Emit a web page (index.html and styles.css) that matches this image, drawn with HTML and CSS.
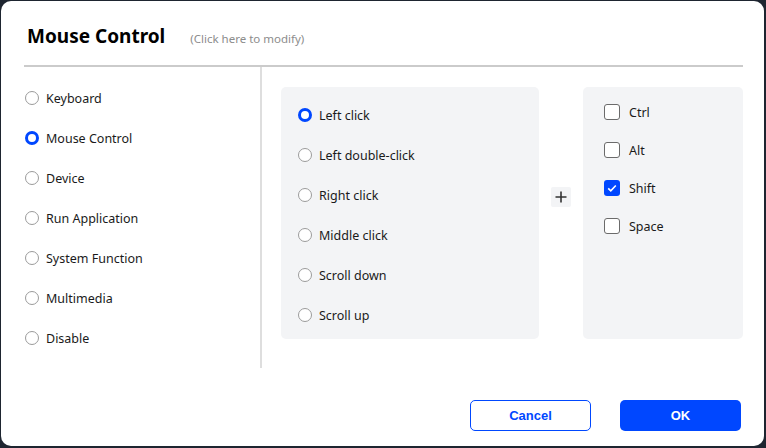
FILE: index.html
```html
<!DOCTYPE html>
<html>
<head>
<meta charset="utf-8">
<title>Mouse Control</title>
<link rel="stylesheet" href="styles.css">
</head>
<body>
<div class="dialog">
	<div class="head">
		<h1 class="title">Mouse Control</h1>
		<span class="hint">(Click here to modify)</span>
	</div>

	<div class="body">
		<!-- key function type -->
		<ul class="types">
			<li class="opt"><span class="radio"></span>Keyboard</li>
			<li class="opt"><span class="radio on"></span>Mouse Control</li>
			<li class="opt"><span class="radio"></span>Device</li>
			<li class="opt"><span class="radio"></span>Run Application</li>
			<li class="opt"><span class="radio"></span>System Function</li>
			<li class="opt"><span class="radio"></span>Multimedia</li>
			<li class="opt"><span class="radio"></span>Disable</li>
		</ul>

		<div class="setup">
			<ul class="panel clicks">
				<li class="opt"><span class="radio on"></span>Left click</li>
				<li class="opt"><span class="radio"></span>Left double-click</li>
				<li class="opt"><span class="radio"></span>Right click</li>
				<li class="opt"><span class="radio"></span>Middle click</li>
				<li class="opt"><span class="radio"></span>Scroll down</li>
				<li class="opt"><span class="radio"></span>Scroll up</li>
			</ul>

			<span class="plus">
				<svg width="12" height="12" viewBox="0 0 12 12"><path d="M6 0.5v11M0.5 6h11" stroke="#333" stroke-width="1.6" fill="none"/></svg>
			</span>

			<ul class="panel keys">
				<li class="chk"><span class="box"></span>Ctrl</li>
				<li class="chk"><span class="box"></span>Alt</li>
				<li class="chk"><span class="box on"><svg width="16" height="16" viewBox="0 0 16 16"><path d="M4.2 8.3l2.6 2.5 5-5.3" stroke="#fff" stroke-width="1.6" fill="none"/></svg></span>Shift</li>
				<li class="chk"><span class="box"></span>Space</li>
			</ul>
		</div>
	</div>

	<div class="foot">
		<button class="btn ghost">Cancel</button>
		<button class="btn primary">OK</button>
	</div>
</div>
</body>
</html>
```

FILE: styles.css
```css
html, body {
	margin: 0;
	height: 100%;
}

body {
	background: #1e2530;
	font-family: "Noto Sans", "Open Sans", sans-serif;
	color: #1a1a1a;
}

ul {
	list-style: none;
	margin: 0;
	padding: 0;
}

.dialog {
	box-sizing: border-box;
	margin: 1px 2px 0 1px;
	height: 445px;
	background: #fff;
	border-radius: 10px;
	padding: 0 21px 0 23px;
	display: flex;
	flex-direction: column;
}

.head {
	height: 66px;
	box-sizing: border-box;
	padding: 21px 0 0 3px;
	border-bottom: 2px solid #cbcbcb;
	display: flex;
	align-items: baseline;
}

.title {
	margin: 0;
	font-size: 19px;
	line-height: 28px;
	font-weight: bold;
	color: #000;
}

.hint {
	margin-left: 25px;
	font-size: 11.5px;
	color: #8c8c8c;
}

.body {
	display: flex;
	height: 301px;
}

.types {
	width: 236px;
	padding-top: 11px;
	border-right: 2px solid #dedede;
}

.opt {
	height: 40px;
	display: flex;
	align-items: center;
	font-size: 12.5px;
}

.radio {
	box-sizing: border-box;
	width: 14px;
	height: 14px;
	margin: 0 7px 0 1px;
	border: 1.5px solid #9b9b9b;
	border-radius: 50%;
	background: #fff;
}

.radio.on {
	border: 3.5px solid #0047ff;
}

.setup {
	display: flex;
	align-items: flex-start;
	padding: 20px 0 0 19px;
}

.panel {
	box-sizing: border-box;
	height: 252px;
	background: #f3f4f6;
	border-radius: 5px;
}

.clicks {
	width: 258px;
	padding: 8px 0 0 16px;
}

.plus {
	width: 20px;
	height: 20px;
	margin: 100px 12px 0;
	background: #f3f4f6;
	border-radius: 2px;
	display: flex;
	align-items: center;
	justify-content: center;
}

.keys {
	width: 160px;
	padding: 6px 0 0 21px;
}

.chk {
	height: 38px;
	display: flex;
	align-items: center;
	font-size: 12.5px;
}

.box {
	box-sizing: border-box;
	width: 16px;
	height: 16px;
	margin-right: 9px;
	border: 1.5px solid #6b6b6b;
	border-radius: 3px;
	background: #fff;
}

.box.on {
	border: none;
	background: #0047ff;
}

.box svg {
	display: block;
}

.foot {
	margin-top: auto;
	padding: 0 2px 15px 0;
	display: flex;
	justify-content: flex-end;
	gap: 29px;
}

.btn {
	box-sizing: border-box;
	width: 121px;
	height: 31px;
	border-radius: 5px;
	font-family: "Liberation Sans", Arial, sans-serif;
	font-size: 13px;
	font-weight: bold;
	cursor: pointer;
}

.ghost {
	background: #fff;
	border: 1px solid #0047ff;
	color: #0047ff;
}

.primary {
	background: #0047ff;
	border: none;
	color: #fff;
}
```
